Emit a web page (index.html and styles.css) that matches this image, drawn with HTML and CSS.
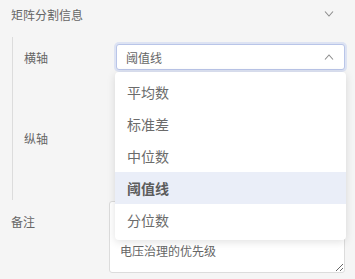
FILE: index.html
```html
<!DOCTYPE html>
<html lang="zh-CN">
<head>
    <meta charset="UTF-8">
    <meta name="viewport" content="width=device-width, initial-scale=1.0">
    <title>矩阵分割信息</title>
    <link rel="stylesheet" href="styles.css">
</head>
<body>
    <div class="section-header">
        <span class="section-title">矩阵分割信息</span>
        <svg class="chevron" width="10" height="6" viewBox="0 0 10 6"><path d="M1 0.5 L5 5 L9 0.5" fill="none" stroke="#8c8c8c" stroke-width="1.1"/></svg>
    </div>

    <div class="axis-group">
        <div class="form-row">
            <label class="axis-label">横轴</label>
            <div class="select-wrap">
                <div class="select is-open">
                    <span class="select-value">阈值线</span>
                    <svg class="chevron" width="10" height="6" viewBox="0 0 10 6"><path d="M1 5.5 L5 1 L9 5.5" fill="none" stroke="#8c8c8c" stroke-width="1.1"/></svg>
                </div>
                <ul class="dropdown">
                    <li class="option">平均数</li>
                    <li class="option">标准差</li>
                    <li class="option">中位数</li>
                    <li class="option selected">阈值线</li>
                    <li class="option">分位数</li>
                </ul>
            </div>
        </div>
        <div class="form-row second">
            <label class="axis-label">纵轴</label>
            <div class="select-wrap">
                <div class="select"></div>
            </div>
        </div>
    </div>

    <div class="remark-row">
        <label class="remark-label">备注</label>
        <textarea class="remark">电压治理的优先级</textarea>
    </div>
</body>
</html>
```

FILE: styles.css
```css
body {
    margin: 0;
    background: #f5f5f5;
    font-family: "Noto Sans CJK SC", "Noto Sans", sans-serif;
    font-size: 12px;
    color: #666;
}
.section-header {
    display: flex;
    justify-content: space-between;
    align-items: center;
    height: 28px;
    padding: 0 21px 0 11px;
}
.section-title {
    font-size: 12px;
    color: #666;
}
.axis-group {
    margin: 9px 0 0 12px;
    border-left: 1px solid #dcdcdc;
    padding: 7px 10px 0 11px;
    height: 156px;
}
.form-row {
    display: flex;
    align-items: center;
}
.form-row.second {
    margin-top: 55px;
}
.axis-label {
    width: 92px;
}
.select-wrap {
    position: relative;
    flex: 1;
}
.select {
    display: flex;
    justify-content: space-between;
    align-items: center;
    height: 24px;
    padding: 0 10px 0 9px;
    background: #fff;
    border: 1px solid #dcdcdc;
    border-radius: 3px;
}
.select.is-open {
    border-color: #b9c5e8;
    box-shadow: 0 0 0 2px #dde3f3;
}
.select-value {
    color: #666;
}
.dropdown {
    position: absolute;
    top: 28px;
    left: -1px;
    right: -1px;
    z-index: 2;
    margin: 0;
    padding: 4px 0;
    list-style: none;
    background: #fff;
    border-radius: 4px;
    box-shadow: 0 2px 8px rgba(0, 0, 0, 0.12);
}
.option {
    height: 32px;
    line-height: 32px;
    padding-left: 12px;
    font-size: 14px;
    color: #6b6b6b;
}
.option.selected {
    background: #eaeef8;
    font-weight: bold;
    color: #5c5c5c;
}
.remark-row {
    display: flex;
    align-items: flex-start;
    padding: 1px 10px 0 11px;
}
.remark-label {
    width: 98px;
    margin-top: 12px;
}
.remark {
    flex: 1;
    height: 72px;
    box-sizing: border-box;
    padding: 40px 10px 4px;
    border: 1px solid #dcdcdc;
    border-radius: 3px;
    background: #fff;
    font-family: inherit;
    font-size: 12px;
    line-height: 18px;
    color: #666;
}
```
